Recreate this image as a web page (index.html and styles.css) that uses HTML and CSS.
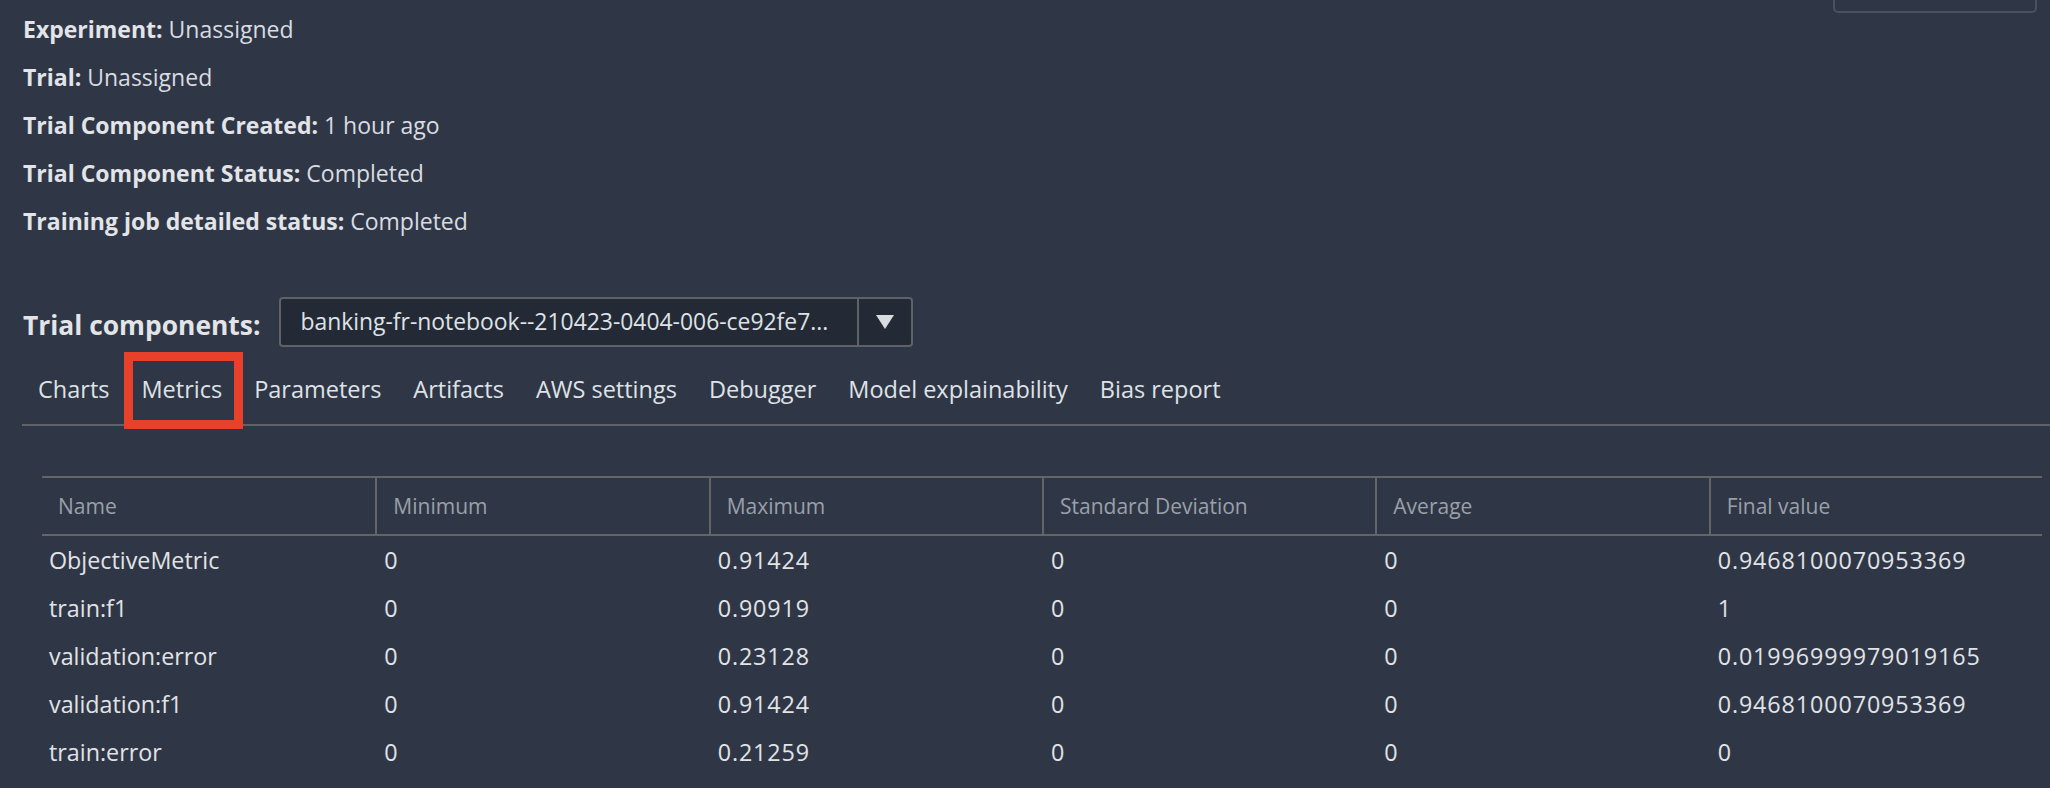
FILE: index.html
```html
<!DOCTYPE html>
<html lang="en">
<head>
<meta charset="utf-8">
<title>Trial component details</title>
<link rel="stylesheet" href="styles.css">
</head>
<body>
<div class="page">
  <div class="top">
    <div class="info">
      <div class="info-line"><span class="info-label">Experiment:</span> Unassigned</div>
      <div class="info-line"><span class="info-label">Trial:</span> Unassigned</div>
      <div class="info-line"><span class="info-label">Trial Component Created:</span> 1 hour ago</div>
      <div class="info-line"><span class="info-label">Trial Component Status:</span> Completed</div>
      <div class="info-line"><span class="info-label">Training job detailed status:</span> Completed</div>
    </div>
    <div class="top-btn"></div>
  </div>

  <div class="tc-row">
    <div class="tc-label">Trial components:</div>
    <div class="select">
      <div class="select-text">banking-fr-notebook--210423-0404-006-ce92fe7...</div>
      <div class="select-arrow">
        <svg width="18" height="14" viewBox="0 0 18 14"><polygon points="0,0 18,0 9,14" fill="#d8dbdf"/></svg>
      </div>
    </div>
  </div>

  <div class="tabs">
    <div class="tab">Charts</div>
    <div class="tab tab-marked">Metrics<span class="highlight"></span></div>
    <div class="tab">Parameters</div>
    <div class="tab">Artifacts</div>
    <div class="tab">AWS settings</div>
    <div class="tab">Debugger</div>
    <div class="tab">Model explainability</div>
    <div class="tab">Bias report</div>
  </div>

  <div class="metrics">
    <div class="th">Name</div>
    <div class="th">Minimum</div>
    <div class="th">Maximum</div>
    <div class="th">Standard Deviation</div>
    <div class="th">Average</div>
    <div class="th">Final value</div>

    <div class="td">ObjectiveMetric</div><div class="td num">0</div><div class="td num">0.91424</div><div class="td num">0</div><div class="td num">0</div><div class="td num">0.9468100070953369</div>
    <div class="td">train:f1</div><div class="td num">0</div><div class="td num">0.90919</div><div class="td num">0</div><div class="td num">0</div><div class="td num">1</div>
    <div class="td">validation:error</div><div class="td num">0</div><div class="td num">0.23128</div><div class="td num">0</div><div class="td num">0</div><div class="td num">0.01996999979019165</div>
    <div class="td">validation:f1</div><div class="td num">0</div><div class="td num">0.91424</div><div class="td num">0</div><div class="td num">0</div><div class="td num">0.9468100070953369</div>
    <div class="td">train:error</div><div class="td num">0</div><div class="td num">0.21259</div><div class="td num">0</div><div class="td num">0</div><div class="td num">0</div>
  </div>
</div>
</body>
</html>
```

FILE: styles.css
```css
html, body {
  margin: 0;
  padding: 0;
  background: #2f3747;
  height: 100%;
  overflow: hidden;
}

body {
  font-family: "Open Sans", "Noto Sans", sans-serif;
  font-size: 23px;
  color: #dfe2e6;
}

.page {
  padding: 0 13px 0 23px;
}

.top {
  display: flex;
  justify-content: space-between;
  align-items: flex-start;
  padding-top: 5px;
}

.info-line {
  height: 48px;
  line-height: 48px;
  color: #d9dce0;
  white-space: nowrap;
}

.info-label {
  font-weight: 700;
  color: #e2e4e8;
}

.top-btn {
  width: 204px;
  height: 53px;
  margin-top: -45px;
  box-sizing: border-box;
  border: 2px solid #4a5261;
  border-radius: 5px;
}

.tc-row {
  display: flex;
  align-items: center;
  height: 50px;
  margin-top: 52px;
  gap: 19px;
}

.tc-label {
  font-size: 26.4px;
  font-weight: 700;
  color: #e2e4e8;
  padding-top: 5px;
  white-space: nowrap;
}

.select {
  width: 634px;
  height: 50px;
  box-sizing: border-box;
  border: 2px solid #5e6166;
  border-radius: 4px;
  background: #232a35;
  display: flex;
  align-items: stretch;
}

.select-text {
  flex: 1;
  padding-left: 19px;
  display: flex;
  align-items: center;
  padding-bottom: 2px;
  white-space: nowrap;
  overflow: hidden;
  color: #dfe2e6;
  font-size: 22.9px;
}

.select-arrow {
  width: 52px;
  border-left: 2px solid #5e6166;
  display: flex;
  align-items: center;
  justify-content: center;
  padding-bottom: 1px;
}

.tabs {
  display: flex;
  margin-left: -1px;
  margin-right: -13px;
  border-bottom: 2px solid #5f6266;
}

.tab {
  position: relative;
  padding: 26px 16px 19px;
  line-height: 32px;
  font-size: 23.5px;
  color: #dfe2e6;
  white-space: nowrap;
}

.highlight {
  position: absolute;
  left: -1px;
  top: 5px;
  width: 119px;
  height: 77px;
  box-sizing: border-box;
  border: 9px solid #e8412b;
}

.metrics {
  display: grid;
  grid-template-columns: repeat(6, 1fr);
  width: 2000px;
  margin-top: 50px;
  margin-left: 19px;
}

.th {
  height: 56px;
  line-height: 56px;
  font-size: 21px;
  color: #9aa0a8;
  border-top: 2px solid #646567;
  border-bottom: 2px solid #646567;
  padding-left: 16px;
  white-space: nowrap;
}

.th:not(:first-child) {
  border-left: 2px solid #646567;
}

.td {
  height: 48px;
  line-height: 48px;
  padding-left: 9px;
  font-size: 23.3px;
  color: #e1e3e6;
  white-space: nowrap;
}

.td.num {
  letter-spacing: 0.9px;
}

.td:nth-child(6n+1) {
  padding-left: 7px;
}
```
